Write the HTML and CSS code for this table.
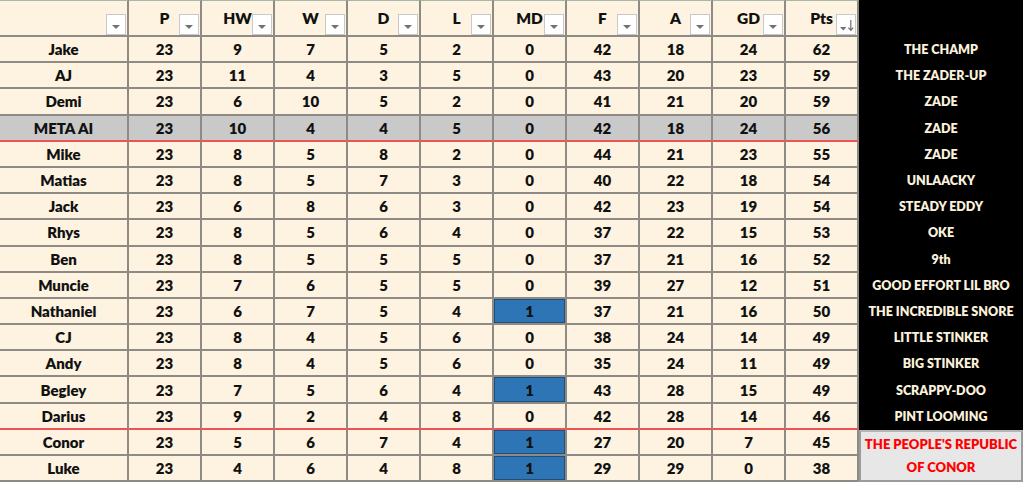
FILE: index.html
```html
<!DOCTYPE html>
<html lang="en">
<head>
<meta charset="utf-8">
<title>League Table</title>
<link rel="stylesheet" href="styles.css">
</head>
<body>
<table class="league">
  <colgroup>
    <col class="c-name">
    <col class="c-stat"><col class="c-stat"><col class="c-stat"><col class="c-stat"><col class="c-stat">
    <col class="c-stat"><col class="c-stat"><col class="c-stat"><col class="c-stat"><col class="c-stat">
    <col class="c-title">
  </colgroup>
  <thead>
    <tr class="head">
      <th><span class="filter"></span></th>
      <th>P<span class="filter"></span></th>
      <th>HW<span class="filter"></span></th>
      <th>W<span class="filter"></span></th>
      <th>D<span class="filter"></span></th>
      <th>L<span class="filter"></span></th>
      <th>MD<span class="filter"></span></th>
      <th>F<span class="filter"></span></th>
      <th>A<span class="filter"></span></th>
      <th>GD<span class="filter"></span></th>
      <th>Pts<span class="filter sort"><svg width="18" height="19" viewBox="0 0 18 19"><path d="M3 12h6.5l-3.25 3.5z" fill="#6f6f6f"/><path d="M13.8 5v10M11.4 12.6l2.4 2.8 2.4-2.8" stroke="#6f6f6f" stroke-width="1.2" fill="none"/></svg></span></th>
      <th class="title"></th>
    </tr>
  </thead>
  <tbody>
    <tr><td>Jake</td><td>23</td><td>9</td><td>7</td><td>5</td><td>2</td><td>0</td><td>42</td><td>18</td><td>24</td><td>62</td><td class="title">THE CHAMP</td></tr>
    <tr><td>AJ</td><td>23</td><td>11</td><td>4</td><td>3</td><td>5</td><td>0</td><td>43</td><td>20</td><td>23</td><td>59</td><td class="title">THE ZADER-UP</td></tr>
    <tr><td>Demi</td><td>23</td><td>6</td><td>10</td><td>5</td><td>2</td><td>0</td><td>41</td><td>21</td><td>20</td><td>59</td><td class="title">ZADE</td></tr>
    <tr class="meta cut"><td>META AI</td><td>23</td><td>10</td><td>4</td><td>4</td><td>5</td><td>0</td><td>42</td><td>18</td><td>24</td><td>56</td><td class="title">ZADE</td></tr>
    <tr><td>Mike</td><td>23</td><td>8</td><td>5</td><td>8</td><td>2</td><td>0</td><td>44</td><td>21</td><td>23</td><td>55</td><td class="title">ZADE</td></tr>
    <tr><td>Matias</td><td>23</td><td>8</td><td>5</td><td>7</td><td>3</td><td>0</td><td>40</td><td>22</td><td>18</td><td>54</td><td class="title">UNLAACKY</td></tr>
    <tr><td>Jack</td><td>23</td><td>6</td><td>8</td><td>6</td><td>3</td><td>0</td><td>42</td><td>23</td><td>19</td><td>54</td><td class="title">STEADY EDDY</td></tr>
    <tr><td>Rhys</td><td>23</td><td>8</td><td>5</td><td>6</td><td>4</td><td>0</td><td>37</td><td>22</td><td>15</td><td>53</td><td class="title">OKE</td></tr>
    <tr><td>Ben</td><td>23</td><td>8</td><td>5</td><td>5</td><td>5</td><td>0</td><td>37</td><td>21</td><td>16</td><td>52</td><td class="title">9th</td></tr>
    <tr><td>Muncie</td><td>23</td><td>7</td><td>6</td><td>5</td><td>5</td><td>0</td><td>39</td><td>27</td><td>12</td><td>51</td><td class="title">GOOD EFFORT LIL BRO</td></tr>
    <tr><td>Nathaniel</td><td>23</td><td>6</td><td>7</td><td>5</td><td>4</td><td class="md">1</td><td>37</td><td>21</td><td>16</td><td>50</td><td class="title">THE INCREDIBLE SNORE</td></tr>
    <tr><td>CJ</td><td>23</td><td>8</td><td>4</td><td>5</td><td>6</td><td>0</td><td>38</td><td>24</td><td>14</td><td>49</td><td class="title">LITTLE STINKER</td></tr>
    <tr><td>Andy</td><td>23</td><td>8</td><td>4</td><td>5</td><td>6</td><td>0</td><td>35</td><td>24</td><td>11</td><td>49</td><td class="title">BIG STINKER</td></tr>
    <tr><td>Begley</td><td>23</td><td>7</td><td>5</td><td>6</td><td>4</td><td class="md">1</td><td>43</td><td>28</td><td>15</td><td>49</td><td class="title">SCRAPPY-DOO</td></tr>
    <tr class="cut"><td>Darius</td><td>23</td><td>9</td><td>2</td><td>4</td><td>8</td><td>0</td><td>42</td><td>28</td><td>14</td><td>46</td><td class="title">PINT LOOMING</td></tr>
    <tr><td>Conor</td><td>23</td><td>5</td><td>6</td><td>7</td><td>4</td><td class="md">1</td><td>27</td><td>20</td><td>7</td><td>45</td><td class="republic" rowspan="2">THE PEOPLE'S REPUBLIC<br>OF CONOR</td></tr>
    <tr><td>Luke</td><td>23</td><td>4</td><td>6</td><td>4</td><td>8</td><td class="md">1</td><td>29</td><td>29</td><td>0</td><td>38</td></tr>
  </tbody>
</table>
</body>
</html>
```
FILE: styles.css
```css
html, body {
  margin: 0;
  padding: 0;
  background: #ffffff;
}

.league {
  border-collapse: separate;
  border-spacing: 0;
  table-layout: fixed;
  width: 1023px;
  font-family: Lato, "Liberation Sans", sans-serif;
  font-weight: 800;
  font-size: 15px;
  color: #111111;
  background: #fdf3e0;
}

.c-name { width: 129px; }
.c-stat { width: 73px; }
.c-title { width: 164px; }

.league th,
.league td {
  padding: 0;
  text-align: center;
  border-right: 2px solid #8e8b85;
  border-bottom: 2px solid #8e8b85;
  overflow: hidden;
  white-space: nowrap;
}

.head { height: 37px; }
.head th {
  position: relative;
  vertical-align: top;
  padding-top: 8px;
  line-height: 19px;
  font-size: 15.5px;
  font-weight: 800;
  border-top: 1px solid #a7b7aa;
}

.filter {
  position: absolute;
  right: 1px;
  bottom: 0;
  width: 18px;
  height: 19px;
  background: #ffffff;
  border: 1px solid #c9c9c9;
}
.filter::after {
  content: "";
  position: absolute;
  left: 5px;
  top: 10px;
  border-left: 4px solid transparent;
  border-right: 4px solid transparent;
  border-top: 4px solid #727272;
}
.filter.sort::after { display: none; }
.filter.sort svg { display: block; }

tbody tr { height: 26.2px; }
tbody td { vertical-align: middle; line-height: 16px; }

.meta td { background: #c9c9c9; }
.cut td { border-bottom-color: #ee5252; }

.league .md {
  background: #2e75b6;
  box-shadow: inset 0 0 0 1px #1f4f7e;
}

.league .title {
  background: #000000;
  color: #fbf1dc;
  font-size: 12.5px;
  border-right: none;
  border-bottom: none;
}
.head .title { border-top: 1px solid #000; }

.league .republic {
  background: #e7e7e7;
  color: #ff0000;
  font-size: 13px;
  line-height: 23px;
  border: 2px solid #9b9b9b;
  border-top: 2px solid #b5b5b5;
  vertical-align: middle;
}
```
